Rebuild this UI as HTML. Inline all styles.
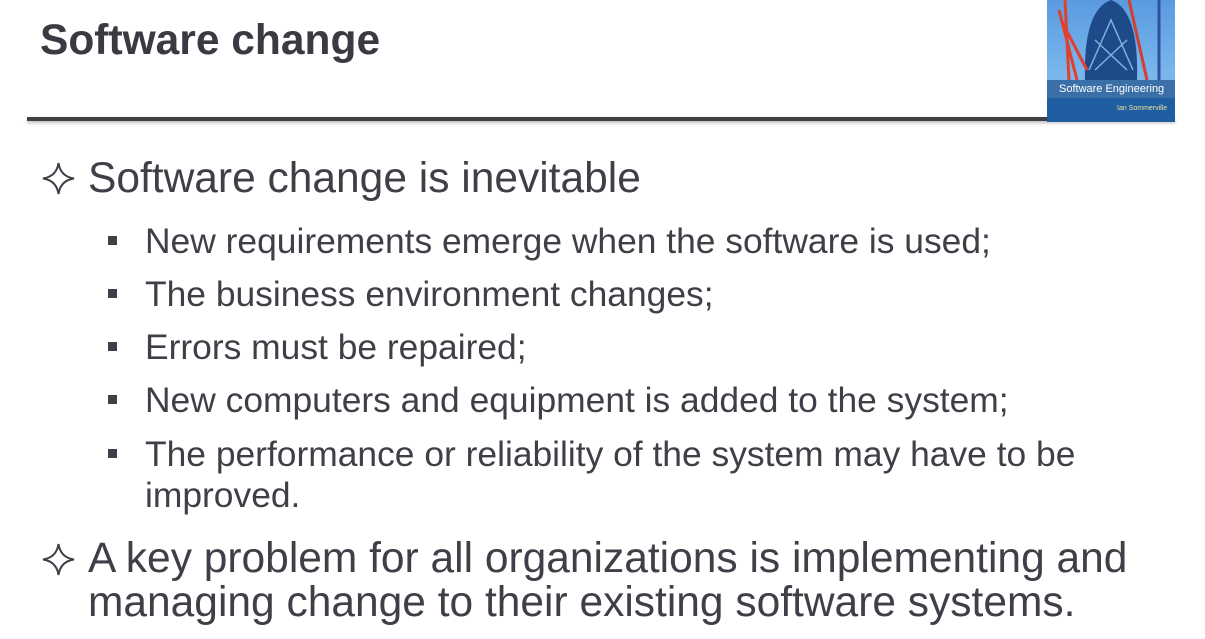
<!DOCTYPE html>
<html><head><meta charset="utf-8"><style>
body{margin:0;width:1205px;height:639px;background:#fff;overflow:hidden;position:relative;font-family:"Liberation Sans",sans-serif;color:#3f3f48}
.t{position:absolute;white-space:nowrap}
h1{position:absolute;left:40px;top:17px;margin:0;font-size:42.5px;font-weight:bold;color:#3a3a42}
.l1{font-size:42.5px;left:88px}
.l2{font-size:35.4px;left:145px}
.sq{position:absolute;width:9px;height:9px;background:#3f3f48;left:108px}
svg.star{position:absolute}
</style></head><body>
<h1>Software change</h1>
<div style="position:absolute;left:27px;top:117px;width:1148px;height:4px;background:#3f3f44;box-shadow:0 2px 3px #bbb"></div>
<div style="position:absolute;left:1047px;top:0;width:128px;height:122px;background:linear-gradient(#5a9be0,#79b6ec 60%,#8bbbe0);overflow:hidden">
<svg width="128" height="122" style="position:absolute;left:0;top:0">
<path d="M38 80 Q36 10 64 0 Q92 10 90 80 Z" fill="#1f4a8a"/>
<path d="M42 70 L64 20 L86 70 M48 40 L80 70 M80 40 L48 70" stroke="#7fb0e0" stroke-width="1.5" fill="none"/>
<path d="M12 10 L30 80 M18 0 L22 80 M14 20 L40 70" stroke="#e04030" stroke-width="3" fill="none"/>
<path d="M82 0 L100 80" stroke="#d04030" stroke-width="3"/>
<path d="M112 0 L112 80" stroke="#3050a0" stroke-width="3"/>
<rect x="0" y="80" width="128" height="42" fill="#1f5ea0"/>
<rect x="0" y="80" width="128" height="18" fill="#3a6fa8"/>
<text x="12" y="92" font-family="Liberation Sans" font-size="11" fill="#fff">Software Engineering</text>
<text x="70" y="110" font-family="Liberation Sans" font-size="7" fill="#f0e0a0">Ian Sommerville</text>
</svg></div>
<svg class="star" style="left:42px;top:162px" width="33" height="33" viewBox="0 0 33 33"><path d="M16.5 1 Q18.5 14.5 32 16.5 Q18.5 18.5 16.5 32 Q14.5 18.5 1 16.5 Q14.5 14.5 16.5 1Z" fill="none" stroke="#3f3f48" stroke-width="2"/></svg>
<div class="t l1" style="top:155px">Software change is inevitable</div>
<div class="sq" style="top:236px"></div><div class="t l2" style="top:221px">New requirements emerge when the software is used;</div>
<div class="sq" style="top:289px"></div><div class="t l2" style="top:274px">The business environment changes;</div>
<div class="sq" style="top:342px"></div><div class="t l2" style="top:327px">Errors must be repaired;</div>
<div class="sq" style="top:395px"></div><div class="t l2" style="top:380px">New computers and equipment is added to the system;</div>
<div class="sq" style="top:449px"></div><div class="t l2" style="top:434px">The performance or reliability of the system may have to be</div>
<div class="t l2" style="top:475px">improved.</div>
<svg class="star" style="left:42px;top:543px" width="33" height="33" viewBox="0 0 33 33"><path d="M16.5 1 Q18.5 14.5 32 16.5 Q18.5 18.5 16.5 32 Q14.5 18.5 1 16.5 Q14.5 14.5 16.5 1Z" fill="none" stroke="#3f3f48" stroke-width="2"/></svg>
<div class="t l1" style="top:535px">A key problem for all organizations is implementing and</div>
<div class="t l1" style="top:579px">managing change to their existing software systems.</div>
</body></html>
